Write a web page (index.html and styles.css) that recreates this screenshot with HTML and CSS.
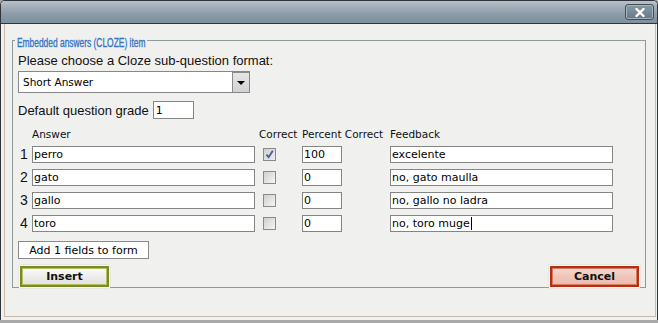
FILE: index.html
```html
<!DOCTYPE html>
<html>
<head>
<meta charset="utf-8">
<link rel="stylesheet" href="styles.css">
</head>
<body>
<div class="window">
  <div class="titlebar">
    <div class="close"><svg width="10" height="9" viewBox="0 0 10 9"><path d="M1.5 1 L8.5 8 M8.5 1 L1.5 8" stroke="#fff" stroke-width="2.2" stroke-linecap="square"/></svg></div>
  </div>
  <div class="body">
    <fieldset class="group">
      <legend class="legend"><span class="legend-text">Embedded answers (CLOZE) item</span></legend>
      <div class="label">Please choose a Cloze sub-question format:</div>
      <div class="select"><span class="select-text">Short Answer</span><span class="select-btn"><span class="tri"></span></span></div>
      <div class="grade-row"><span class="label-inline">Default question grade</span><div class="field grade">1</div></div>
      <div class="answers">
        <div class="hcell"></div>
        <div class="hcell">Answer</div>
        <div class="hcell hcorrect">Correct</div>
        <div class="hcell hspan">Percent Correct</div>
        <div class="hcell">Feedback</div>

        <div class="num">1</div>
        <div class="field">perro</div>
        <div class="chk-cell"><span class="chk checked"><svg width="11" height="11" viewBox="0 0 11 11"><path d="M2.5 5.5 L4.6 8.3 L8.8 1.8" fill="none" stroke="#4b5a9b" stroke-width="1.8"/></svg></span></div>
        <div class="field">100</div>
        <div class="spacer"></div>
        <div class="field">excelente</div>

        <div class="num">2</div>
        <div class="field">gato</div>
        <div class="chk-cell"><span class="chk"></span></div>
        <div class="field">0</div>
        <div class="spacer"></div>
        <div class="field">no, gato maulla</div>

        <div class="num">3</div>
        <div class="field">gallo</div>
        <div class="chk-cell"><span class="chk"></span></div>
        <div class="field">0</div>
        <div class="spacer"></div>
        <div class="field">no, gallo no ladra</div>

        <div class="num">4</div>
        <div class="field">toro</div>
        <div class="chk-cell"><span class="chk"></span></div>
        <div class="field">0</div>
        <div class="spacer"></div>
        <div class="field">no, toro muge<span class="caret"></span></div>
      </div>
      <div class="add-btn">Add 1 fields to form</div>
      <div class="actions">
        <div class="btn insert"><span>Insert</span></div>
        <div class="btn cancel"><span>Cancel</span></div>
      </div>
    </fieldset>
  </div>
</div>
</body>
</html>
```
FILE: styles.css
```css
html, body {
  margin: 0;
  padding: 0;
}
body {
  width: 658px;
  height: 323px;
  background: #a9a9a9;
  overflow: hidden;
}
.window {
  box-sizing: border-box;
  width: 658px;
  height: 320px;
  border: 1px solid #2f353b;
  border-bottom: none;
  border-radius: 5px 5px 0 0;
  background: #f0f0ee;
  display: flex;
  flex-direction: column;
}
.titlebar {
  height: 22px;
  border-bottom: 1px solid #2f353b;
  border-radius: 4px 4px 0 0;
  background: linear-gradient(#b6c1cb, #8b9ba7 60%, #7f919e);
  display: flex;
  justify-content: flex-end;
  align-items: flex-start;
  padding-right: 3px;
}
.close {
  box-sizing: border-box;
  width: 29px;
  height: 16px;
  margin-top: 3px;
  border: 1px solid #434f58;
  border-radius: 3px;
  background: linear-gradient(#8a99a5, #66788a);
  box-shadow: inset 0 0 0 1px #a6b3bd;
  display: flex;
  align-items: center;
  justify-content: center;
}
.close svg { display: block; }
.body {
  flex: 1;
  margin: 0 1px 3px 3px;
  border-left: 1px solid #c8bbab;
  border-right: 1px solid #c8bbab;
  border-bottom: 1px solid #c8bbab;
  display: flex;
  flex-direction: column;
}
.group {
  box-sizing: border-box;
  margin: 9px 9px 0 7px;
  height: 255px;
  padding: 0 0 0 5px;
  border: 1px solid #8e9b98;
  min-width: 0;
}
.legend {
  box-sizing: border-box;
  width: 132px;
  padding: 0 0 0 2px;
  margin-left: -3px;
  height: 14px;
  overflow: visible;
  white-space: nowrap;
}
.legend-text {
  display: inline-block;
  font-family: "Liberation Sans", Arial, sans-serif;
  font-size: 12px;
  line-height: 14px;
  color: #3575c6;
  -webkit-text-stroke: 0.35px #3575c6;
  transform: scaleX(0.70);
  transform-origin: 0 50%;
}
.label, .label-inline, .num {
  font-family: "Liberation Sans", Arial, sans-serif;
  font-size: 13px;
  color: #111;
}
.label {
  line-height: 16px;
  margin-top: 6px;
}
.select {
  box-sizing: border-box;
  width: 232px;
  height: 22px;
  margin-top: 2px;
  border: 1px solid #878787;
  background: #fff;
  display: flex;
  align-items: center;
  justify-content: space-between;
}
.select-text {
  padding-left: 4px;
  font-family: "DejaVu Sans", Verdana, sans-serif;
  font-size: 10.5px;
  color: #000;
}
.select-btn {
  box-sizing: border-box;
  width: 17px;
  height: 20px;
  border: 1px solid #8a8a8a;
  border-right: none;
  border-bottom: none;
  background: linear-gradient(#e6e6e6, #d2d2d2);
  display: flex;
  align-items: center;
  justify-content: center;
}
.tri {
  width: 0;
  height: 0;
  border-left: 4px solid transparent;
  border-right: 4px solid transparent;
  border-top: 4px solid #000;
}
.grade-row {
  display: flex;
  align-items: center;
  margin-top: 8px;
  gap: 4px;
}
.field {
  box-sizing: border-box;
  height: 17px;
  border: 1px solid #858585;
  background: #fff;
  font-family: "DejaVu Sans", Verdana, sans-serif;
  font-size: 11px;
  line-height: 15px;
  padding-left: 1px;
  color: #000;
  white-space: nowrap;
  overflow: hidden;
  display: flex;
  align-items: center;
}
.field.grade {
  width: 41px;
  height: 18px;
  padding-left: 2px;
}
.caret {
  display: inline-block;
  width: 1px;
  height: 13px;
  background: #000;
  margin-left: 1px;
}
.answers {
  display: grid;
  grid-template-columns: 14px 223px 47px 40px 48px 223px;
  grid-auto-rows: 17px;
  row-gap: 6px;
  margin-top: 4px;
}
.answers > .hcell {
  font-family: "DejaVu Sans", Verdana, sans-serif;
  font-size: 10.5px;
  line-height: 12px;
  color: #111;
  white-space: nowrap;
  align-self: start;
  margin-top: 5px;
}
.hcorrect { padding-left: 4px; }
.hspan { grid-column: span 2; }
.num {
  line-height: 17px;
  padding-left: 2px;
  font-size: 14px;
}
.chk-cell {
  padding-left: 8px;
  display: flex;
  align-items: center;
}
.chk {
  box-sizing: border-box;
  width: 13px;
  height: 13px;
  border: 1px solid #8a8a8a;
  background: linear-gradient(135deg, #cfcfcf, #f6f6f6);
  display: flex;
  align-items: center;
  justify-content: center;
}
.chk.checked {
  background: linear-gradient(135deg, #d0d0d0, #ededed);
}
.chk svg { display: block; }
.add-btn {
  box-sizing: border-box;
  width: 131px;
  height: 18px;
  margin-top: 9px;
  border: 1px solid #8a8a8a;
  background: #fff;
  font-family: "DejaVu Sans", Verdana, sans-serif;
  font-size: 11px;
  color: #000;
  display: flex;
  align-items: center;
  justify-content: center;
}
.actions {
  display: flex;
  justify-content: space-between;
  margin-top: 6px;
  padding-left: 1px;
  padding-right: 5px;
}
.btn {
  box-sizing: border-box;
  width: 91px;
  height: 23px;
  padding: 1px;
  background: #f6f6f4;
  box-shadow: 0 0 1px #bbb;
}
.btn span {
  box-sizing: border-box;
  display: flex;
  align-items: center;
  justify-content: center;
  width: 100%;
  height: 100%;
  font-family: "DejaVu Sans", Verdana, sans-serif;
  font-size: 11px;
  font-weight: bold;
  color: #111;
}
.insert span {
  border: 2px solid #7b8a27;
  box-shadow: inset 0 0 0 1px #b6c05e;
  background: linear-gradient(#fbfbf8, #ececea 55%, #e2e2de);
}
.cancel span {
  border: 2px solid #b3300e;
  box-shadow: inset 0 0 0 1px #d97a64;
  background: linear-gradient(#f7d9d1, #efc4b8 55%, #ebbcb0);
}
```
